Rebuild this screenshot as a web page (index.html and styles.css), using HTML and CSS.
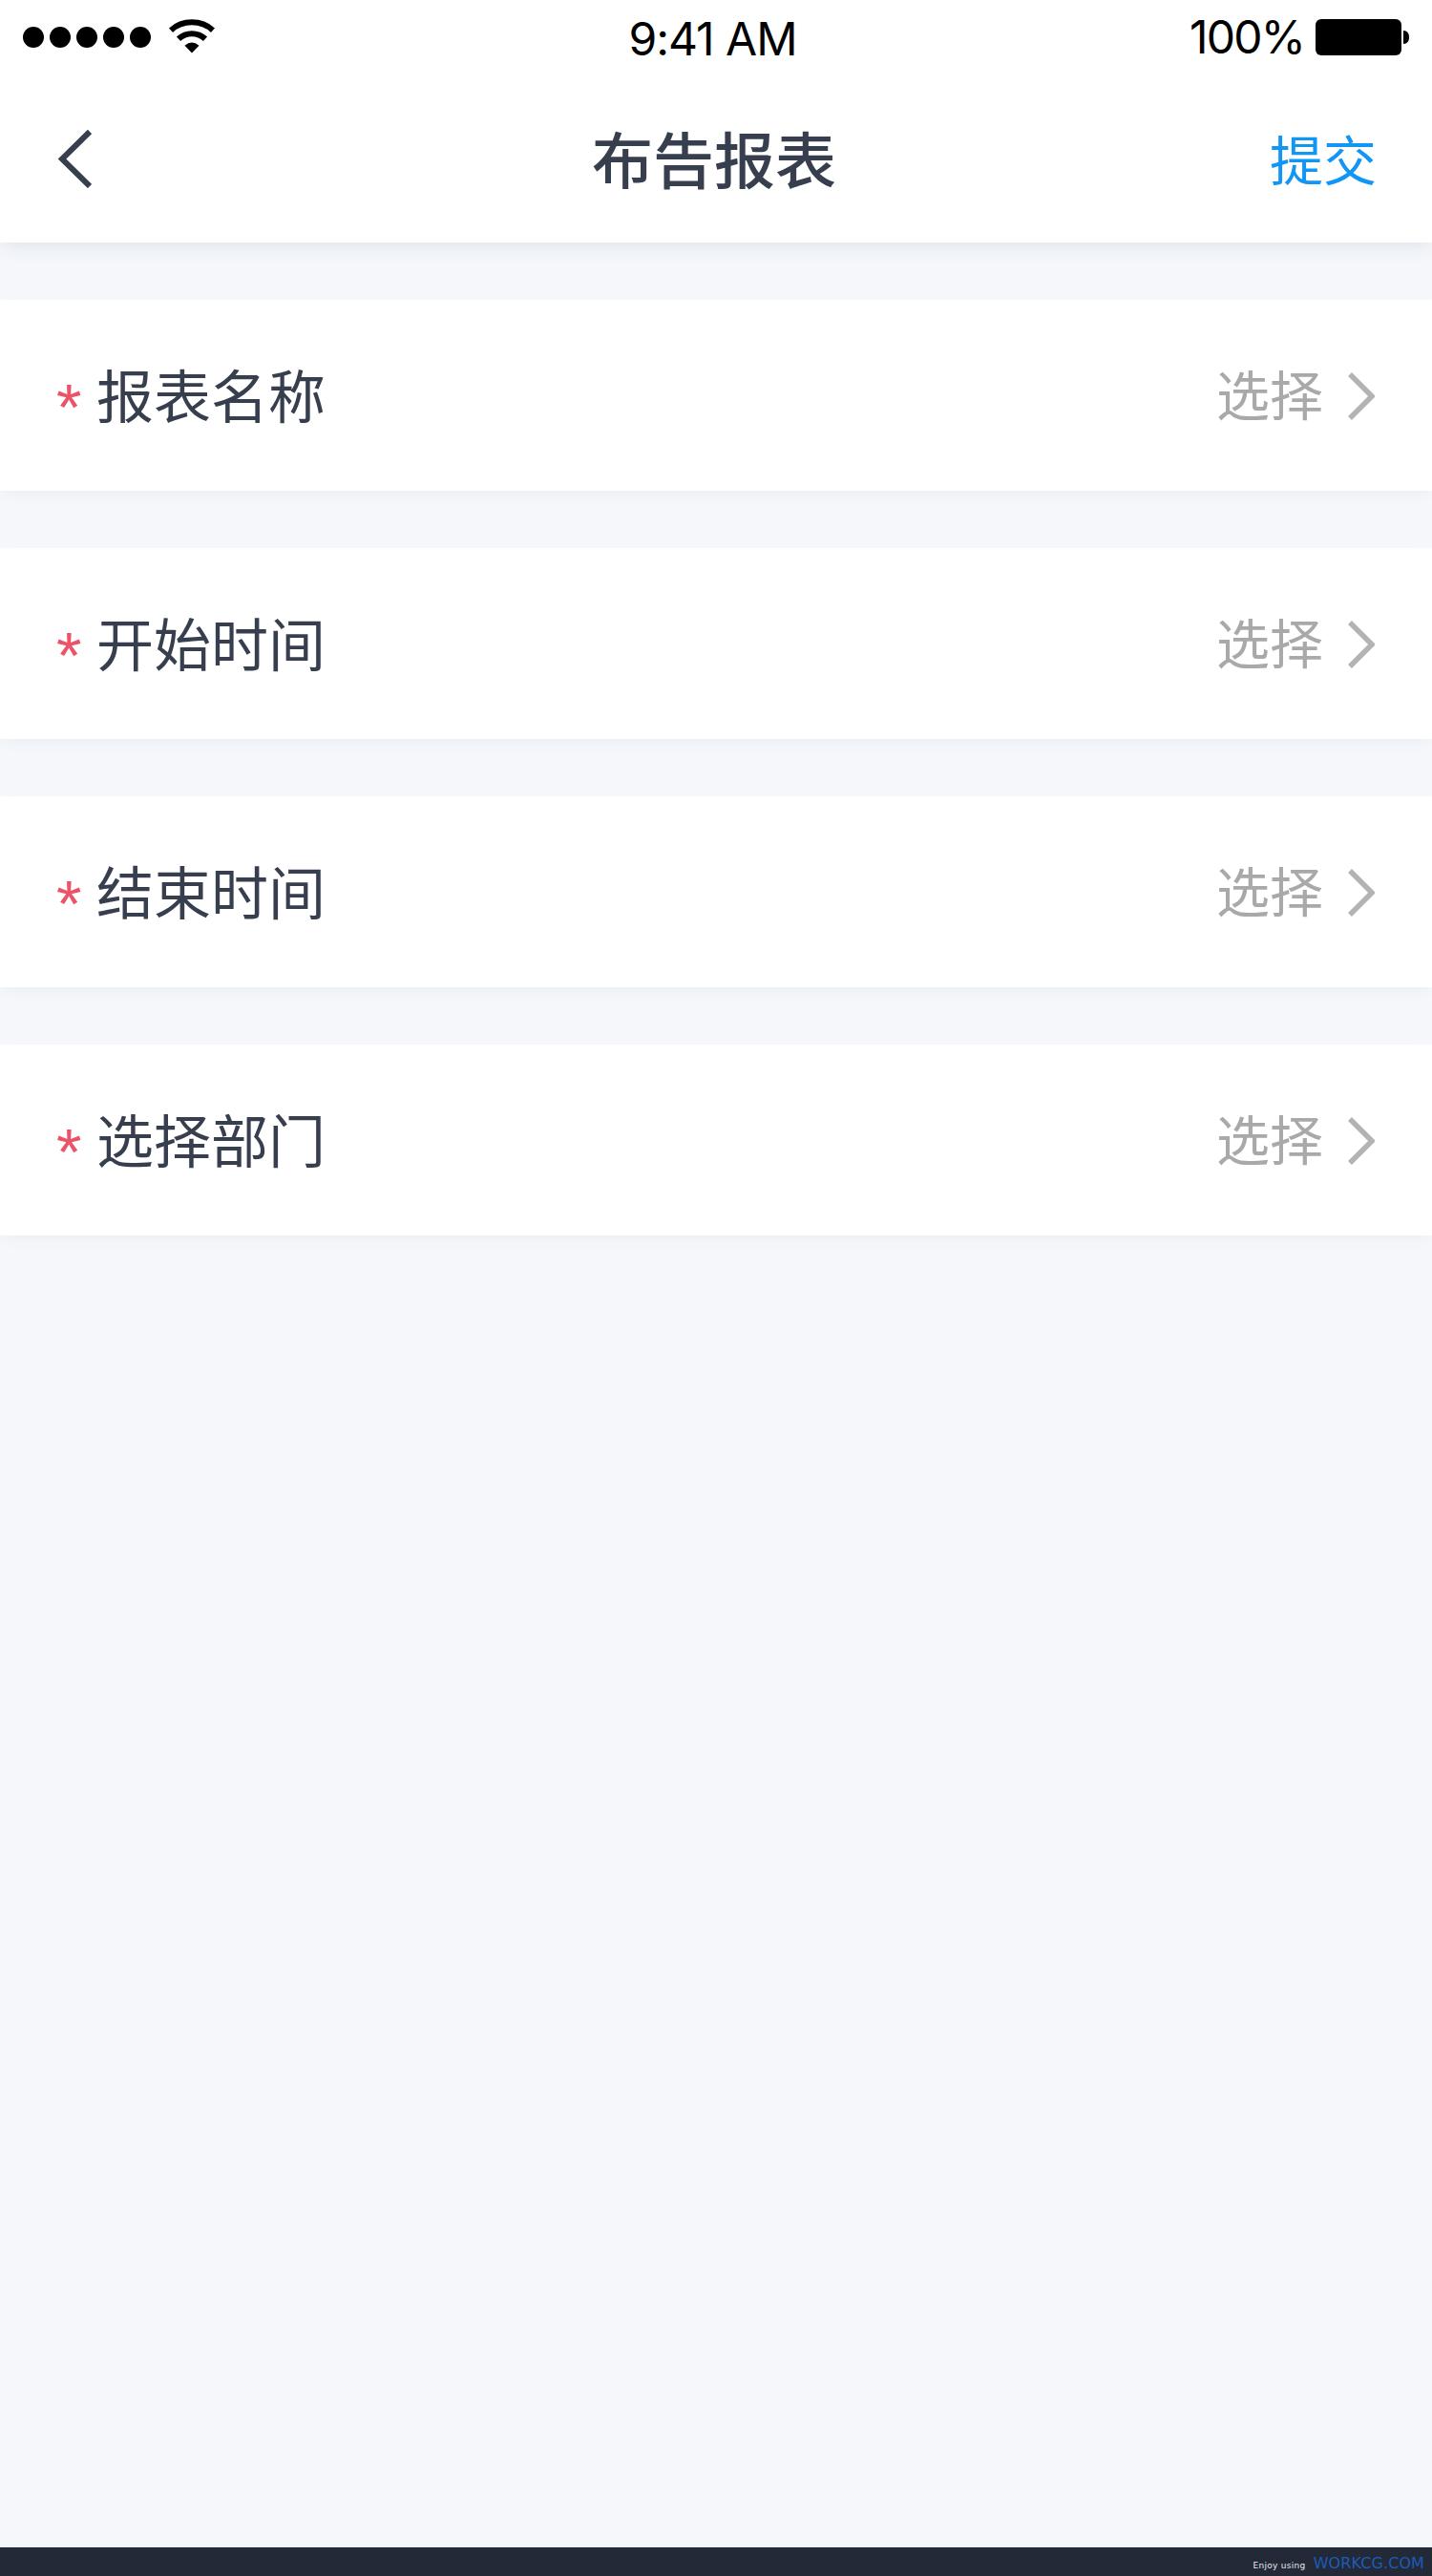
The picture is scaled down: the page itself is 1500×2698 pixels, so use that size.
FILE: index.html
```html
<!DOCTYPE html>
<html lang="zh-CN">
<head>
  <meta charset="UTF-8">
  <meta name="viewport" content="width=device-width, initial-scale=1.0">
  <title>布告报表</title>
  <link rel="stylesheet" href="styles.css">
</head>
<body>
  <header class="header">
    <div class="status-bar">
      <div class="signal">
        <i class="dot"></i>
        <i class="dot"></i>
        <i class="dot"></i>
        <i class="dot"></i>
        <i class="dot"></i>
        <svg class="wifi" width="48" height="36" viewBox="0 0 48 36">
          <path d="M2 11.700C14 0.500 34 0.500 46 11.700" fill="none" stroke="#000" stroke-width="6"/>
          <path d="M10 20.800C18 13.300 30 13.300 38 20.800" fill="none" stroke="#000" stroke-width="6"/>
          <path d="M16.500 27.800Q24 21 31.500 27.800L24 35.500Z"/>
        </svg>
      </div>
      <span class="time">9:41 AM</span>
      <div class="power">
        <span class="percent">100%</span>
        <svg width="98" height="38" viewBox="0 0 98 38">
          <rect width="90" height="38" rx="6"/>
          <path d="M92 12C96 12 98 15 98 19S96 26 92 26Z"/>
        </svg>
      </div>
    </div>
    <nav class="nav-bar">
      <svg class="back" width="36" height="62" viewBox="0 0 36 62">
        <path d="M34 3L5 31.500L34 60" fill="none" stroke="#373f4e" stroke-width="6"/>
      </svg>
      <h1 class="title">布告报表</h1>
      <a class="submit">提交</a>
    </nav>
  </header>

  <main class="form">
    <div class="row">
      <span class="star">*</span>
      <span class="label">报表名称</span>
      <span class="value">选择</span>
      <svg class="arrow" width="28" height="50" viewBox="0 0 28 50"><path d="M2 2L25 25L2 48"/></svg>
    </div>
    <div class="row">
      <span class="star">*</span>
      <span class="label">开始时间</span>
      <span class="value">选择</span>
      <svg class="arrow" width="28" height="50" viewBox="0 0 28 50"><path d="M2 2L25 25L2 48"/></svg>
    </div>
    <div class="row">
      <span class="star">*</span>
      <span class="label">结束时间</span>
      <span class="value">选择</span>
      <svg class="arrow" width="28" height="50" viewBox="0 0 28 50"><path d="M2 2L25 25L2 48"/></svg>
    </div>
    <div class="row">
      <span class="star">*</span>
      <span class="label">选择部门</span>
      <span class="value">选择</span>
      <svg class="arrow" width="28" height="50" viewBox="0 0 28 50"><path d="M2 2L25 25L2 48"/></svg>
    </div>
  </main>

  <footer class="footer">
    <span class="enjoy">Enjoy using</span>
    <span class="site">WORKCG.COM</span>
  </footer>
</body>
</html>
```

FILE: styles.css
```css
* {
  box-sizing: border-box;
}

body {
  margin: 0;
  min-height: 2698px;
  display: flex;
  flex-direction: column;
  background-color: #f5f7fb;
  color: #373f4e;
  font-family: "Noto Sans CJK SC", sans-serif;
}

svg {
  display: block;
  flex-shrink: 0;
}

.header {
  height: 254px;
  background-color: #fff;
  box-shadow: 0 8px 16px -2px rgba(70, 100, 120, 0.1);
}

.status-bar {
  display: grid;
  grid-template-columns: 1fr auto 1fr;
  grid-template-rows: 78px;
  height: 78px;
  padding: 0 24px;
  color: #000;
  font-family: Inter, sans-serif;
  font-size: 48px;
  line-height: 82px;
}

.signal {
  display: flex;
  align-items: center;
  gap: 6px;
}

.dot {
  width: 22px;
  height: 22px;
  border-radius: 50%;
  background-color: #000;
}

.wifi {
  margin-left: 13px;
  margin-bottom: 3px;
}

.time {
  letter-spacing: -1px;
  margin-right: 7px;
}

.power {
  display: flex;
  justify-content: flex-end;
  align-items: center;
  gap: 12px;
}

.percent {
  letter-spacing: -1.8px;
}

.nav-bar {
  display: grid;
  grid-template-columns: 1fr auto 1fr;
  align-items: center;
  height: 176px;
  padding: 0 58px 0 60px;
}

.title {
  margin: 0 6px 0 0;
  padding-bottom: 4px;
  font-size: 64px;
  font-weight: 500;
  line-height: 172px;
}

.submit {
  padding-bottom: 3px;
  text-align: right;
  color: #1296f5;
  font-size: 56px;
}

.form {
  display: flex;
  flex-direction: column;
  gap: 60px;
  padding-top: 60px;
}

.row {
  display: flex;
  align-items: center;
  height: 200px;
  padding: 0 60px 0 59px;
  background-color: #fff;
  box-shadow: 0 6px 14px -4px rgba(70, 100, 120, 0.07);
}

.star {
  width: 42px;
  padding-top: 24px;
  color: #ea5368;
  font-family: "Liberation Sans", sans-serif;
  font-size: 68px;
}

.label {
  flex: 1;
  padding-bottom: 6px;
  font-size: 60px;
}

.value {
  padding-bottom: 8px;
  color: #a9a9a9;
  font-size: 56px;
}

.arrow {
  margin-top: 2px;
  margin-left: 26px;
}

.arrow path {
  fill: none;
  stroke: #b3b3b3;
  stroke-width: 5.5;
}

.footer {
  display: flex;
  justify-content: flex-end;
  align-items: center;
  gap: 8px;
  height: 30px;
  margin-top: auto;
  padding-right: 8px;
  background-color: #232937;
  font-family: "DejaVu Sans", sans-serif;
}

.enjoy {
  padding-top: 7px;
  color: #e8eaee;
  font-size: 9px;
  letter-spacing: 0.3px;
}

.site {
  padding-top: 2px;
  color: #1d5bb8;
  font-size: 16px;
  letter-spacing: 0.1px;
}
```
